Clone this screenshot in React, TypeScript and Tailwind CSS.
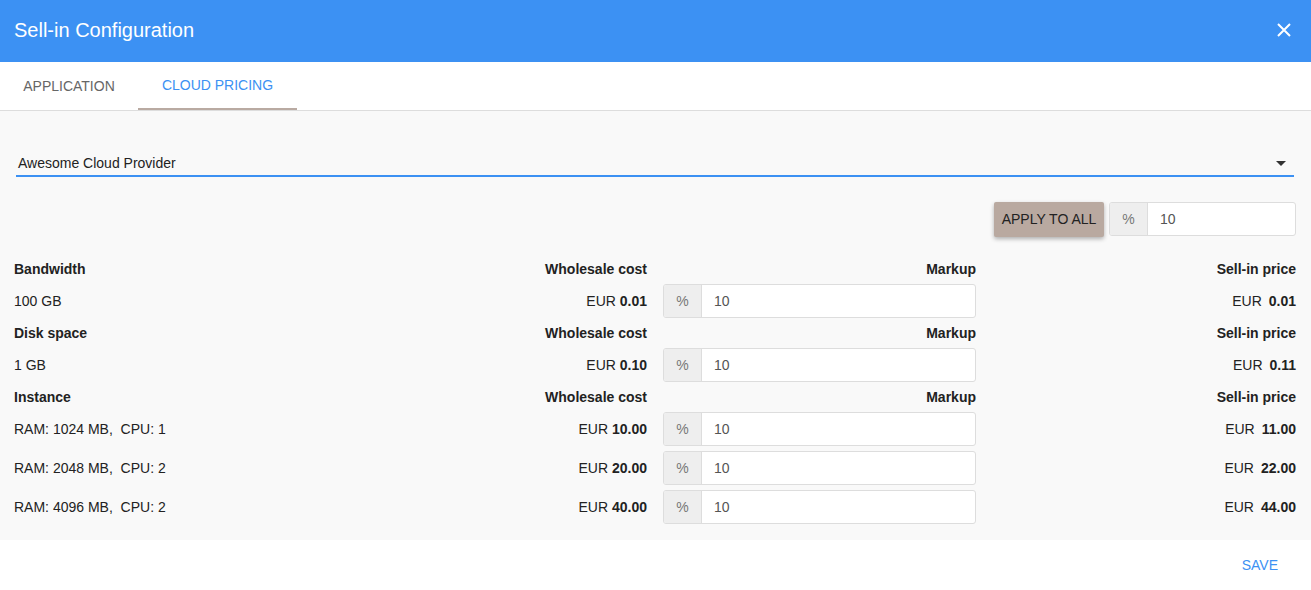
import React from "react";

function PercentInput({ value }: { value: string }) {
  return (
    <div className="flex h-[34px] w-full rounded-[3px] border border-[#dddddd] bg-white overflow-hidden">
      <div className="flex w-[38px] shrink-0 items-center justify-center border-r border-[#dddddd] bg-[#eeeeee] text-[14px] text-[#777777]">
        %
      </div>
      <div className="flex flex-1 items-center pl-[12px] text-[14px] text-[#555555]">{value}</div>
    </div>
  );
}

function HeaderRow({ label }: { label: string }) {
  return (
    <div className="grid h-[31px] grid-cols-[308px_309px_313px_1fr] items-center gap-x-4 pt-[1px] text-[14px] font-bold text-[#222222]">
      <div>{label}</div>
      <div className="text-right">Wholesale cost</div>
      <div className="text-right">Markup</div>
      <div className="text-right">Sell-in price</div>
    </div>
  );
}

function DataRow({ label, cost, sell }: { label: string; cost: string; sell: string }) {
  return (
    <div className="grid h-[33px] grid-cols-[308px_309px_313px_1fr] items-center gap-x-4 text-[14px] text-[#222222]">
      <div className="whitespace-pre">{label}</div>
      <div className="text-right">
        EUR <span className="font-bold">{cost}</span>
      </div>
      <div>
        <PercentInput value="10" />
      </div>
      <div className="text-right">
        EUR<span className="ml-[7px] font-bold">{sell}</span>
      </div>
    </div>
  );
}

export default function App() {
  return (
    <div className="w-[1311px] h-[590px] bg-white flex flex-col font-['Liberation_Sans',Arial,sans-serif]">
      {/* Title bar */}
      <div className="flex h-[62px] shrink-0 items-center justify-between bg-[#3c91f3] pb-[2px] pl-[14px] pr-[20px]">
        <div className="text-[20px] text-white">Sell-in Configuration</div>
        <svg width="14" height="14" viewBox="0 0 14 14">
          <path d="M1 1 L13 13 M13 1 L1 13" stroke="white" strokeWidth="2" />
        </svg>
      </div>

      {/* Tabs */}
      <div className="flex h-[49px] shrink-0 border-b border-[#dddddd] bg-white">
        <div className="flex w-[138px] items-center justify-center text-[14px] text-[#666666]">APPLICATION</div>
        <div className="flex w-[159px] items-center justify-center border-b-2 border-[#b9aaa2] text-[14px] text-[#3c91f3]">
          CLOUD PRICING
        </div>
      </div>

      {/* Content */}
      <div className="flex flex-col bg-[#f9f9f9] pl-[14px] pr-[15px] pt-[42px] pb-[17px]">
        <div className="relative mx-[2px] border-b-2 border-[#3c91f3] pb-[2px] pl-[2px] text-[14px] leading-[20px] text-[#222222]">
          Awesome Cloud Provider
          <div className="absolute right-[8px] top-[8px] h-0 w-0 border-l-[5px] border-r-[5px] border-t-[5px] border-l-transparent border-r-transparent border-t-[#333333]" />
        </div>

        <div className="mt-[25px] flex h-[35px] justify-end gap-[5px]">
          <button className="h-[35px] w-[110px] rounded-[2px] bg-[#b9a9a0] text-[14px] text-[#222222] shadow-[0_2px_4px_rgba(0,0,0,0.3)]">
            APPLY TO ALL
          </button>
          <div className="w-[187px]">
            <PercentInput value="10" />
          </div>
        </div>

        <div className="mt-[16px] flex flex-col">
          <HeaderRow label="Bandwidth" />
          <DataRow label="100 GB" cost="0.01" sell="0.01" />
          <HeaderRow label="Disk space" />
          <DataRow label="1 GB" cost="0.10" sell="0.11" />
          <HeaderRow label="Instance" />
          <div className="flex flex-col gap-[6px]">
            <DataRow label={"RAM: 1024 MB,  CPU: 1"} cost="10.00" sell="11.00" />
            <DataRow label={"RAM: 2048 MB,  CPU: 2"} cost="20.00" sell="22.00" />
            <DataRow label={"RAM: 4096 MB,  CPU: 2"} cost="40.00" sell="44.00" />
          </div>
        </div>
      </div>

      {/* Footer */}
      <div className="flex h-[50px] items-center justify-end bg-white pr-[17px]">
        <button className="px-4 text-[14px] text-[#3c91f3]">SAVE</button>
      </div>
    </div>
  );
}
